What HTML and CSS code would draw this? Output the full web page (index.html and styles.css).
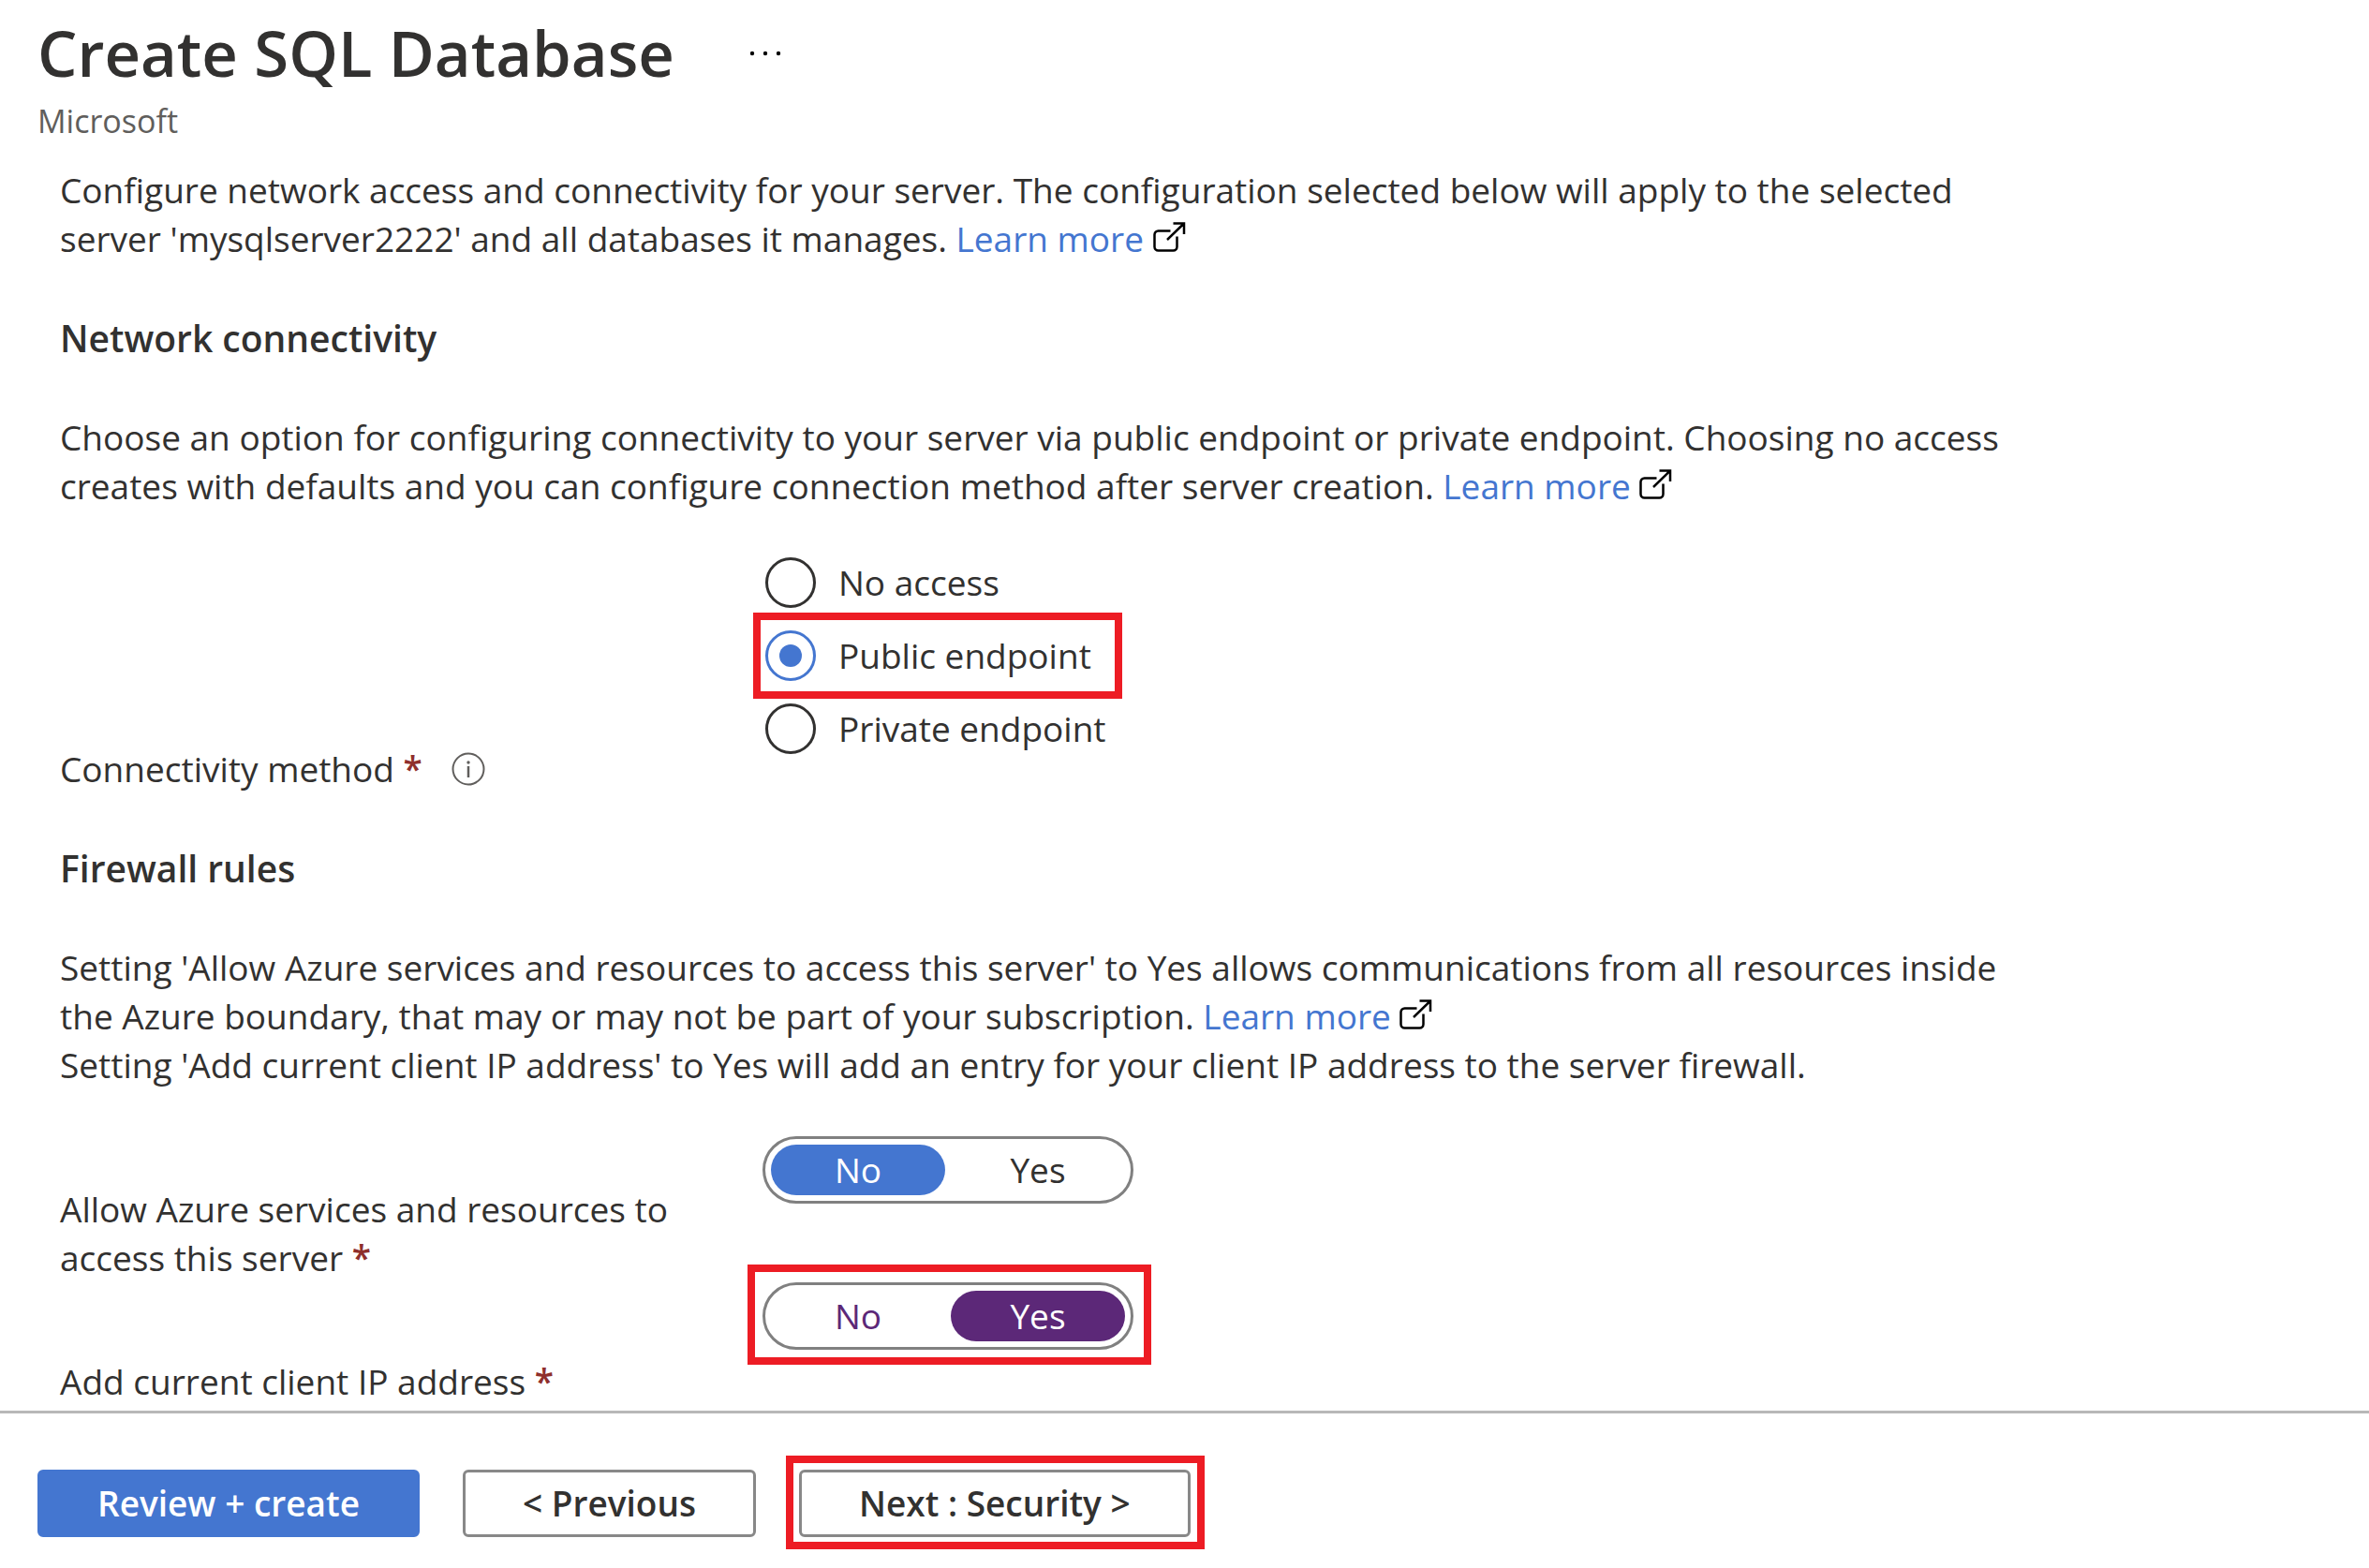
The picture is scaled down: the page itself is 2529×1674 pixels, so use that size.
FILE: index.html
```html
<!DOCTYPE html>
<html lang="en">
<head>
<meta charset="utf-8">
<meta name="viewport" content="width=device-width, initial-scale=1">
<title>Create SQL Database</title>
<link rel="stylesheet" href="styles.css">
</head>
<body>
<svg class="sprite" aria-hidden="true">
  <symbol id="external" viewBox="0 0 36 36">
    <path d="M18.500 9.500H5.500a4 4 0 0 0-4 4v13a4 4 0 0 0 4 4h16a4 4 0 0 0 4-4v-11M15 19 33 1.500M21.500 1.500H33V13" fill="none" stroke="currentColor" stroke-width="2.500"/>
  </symbol>
</svg>
<div class="page">
  <header class="header">
    <div class="title-row">
      <h1 class="title">Create SQL Database</h1>
      <button class="more" type="button" aria-label="More actions">
        <svg class="more-icon" viewBox="0 0 34 6" aria-hidden="true"><circle cx="3" cy="3" r="2.200"/><circle cx="17" cy="3" r="2.200"/><circle cx="31" cy="3" r="2.200"/></svg>
      </button>
    </div>
    <p class="subtitle">Microsoft</p>
  </header>

  <main class="content">
    <p class="text">Configure network access and connectivity for your server. The configuration selected below will apply to the selected server 'mysqlserver2222' and all databases it manages. <a class="link" href="#">Learn more</a> <svg class="external" aria-hidden="true"><use href="#external"/></svg></p>

    <h2 class="heading">Network connectivity</h2>
    <p class="text">Choose an option for configuring connectivity to your server via public endpoint or private endpoint. Choosing no access creates with defaults and you can configure connection method after server creation. <a class="link" href="#">Learn more</a> <svg class="external" aria-hidden="true"><use href="#external"/></svg></p>

    <div class="field field-options">
      <div class="field-label" id="method-label">Connectivity method <span class="required">*</span>
        <svg class="info" viewBox="0 0 36 36" aria-hidden="true"><circle cx="18" cy="18" r="16.500" fill="none" stroke="currentColor" stroke-width="2"/><circle cx="18" cy="11" r="1.700" fill="currentColor"/><path d="M18 15v12" stroke="currentColor" stroke-width="2.500"/></svg>
      </div>
      <div class="options" role="radiogroup" aria-labelledby="method-label">
        <label class="option"><input class="radio" type="radio" name="method">No access</label>
        <label class="option option-marked"><input class="radio" type="radio" name="method" checked>Public endpoint</label>
        <label class="option"><input class="radio" type="radio" name="method">Private endpoint</label>
      </div>
    </div>

    <h2 class="heading">Firewall rules</h2>
    <p class="text">Setting 'Allow Azure services and resources to access this server' to Yes allows communications from all resources inside the Azure boundary, that may or may not be part of your subscription. <a class="link" href="#">Learn more</a> <svg class="external" aria-hidden="true"><use href="#external"/></svg><br>Setting 'Add current client IP address' to Yes will add an entry for your client IP address to the server firewall.</p>

    <div class="field field-azure">
      <div class="field-label" id="azure-label">Allow Azure services and resources to access this server <span class="required">*</span></div>
      <div class="toggle" role="radiogroup" aria-labelledby="azure-label">
        <label class="segment"><input class="segment-input" type="radio" name="azure" checked>No</label>
        <label class="segment"><input class="segment-input" type="radio" name="azure">Yes</label>
      </div>
    </div>
    <div class="field field-client">
      <div class="field-label" id="client-label">Add current client IP address <span class="required">*</span></div>
      <div class="toggle toggle-changed" role="radiogroup" aria-labelledby="client-label">
        <label class="segment"><input class="segment-input" type="radio" name="client">No</label>
        <label class="segment"><input class="segment-input" type="radio" name="client" checked>Yes</label>
      </div>
    </div>
  </main>

  <footer class="footer">
    <button class="button button-primary" type="button">Review + create</button>
    <button class="button" type="button">&lt; Previous</button>
    <button class="button button-marked" type="button">Next : Security &gt;</button>
  </footer>
</div>
</body>
</html>
```

FILE: styles.css
```css
* {
  box-sizing: border-box;
}

body {
  margin: 0;
  background: #fff;
  color: #323130;
  font-family: "Open Sans", "Noto Sans", sans-serif;
  font-size: 37px;
  line-height: 52px;
}

h1, h2, p {
  margin: 0;
}

.sprite {
  display: none;
}

.page {
  display: flex;
  flex-direction: column;
  min-height: 100vh;
}

.header {
  padding: 10px 40px 0;
}

.title-row {
  display: flex;
  align-items: center;
  gap: 80px;
}

.title {
  font-size: 67px;
  font-weight: 600;
  line-height: 93px;
}

.more {
  display: flex;
  padding: 0;
  border: 0;
  background: none;
}

.more-icon {
  width: 34px;
  height: 6px;
}

.subtitle {
  color: #605e5c;
  font-size: 34px;
}

.content {
  flex: 1;
  padding: 22px 64px 0;
}

.text {
  max-width: 2100px;
}

.link {
  color: #4476d0;
  text-decoration: none;
}

.external {
  width: 36px;
  height: 36px;
  color: #000;
  vertical-align: -4px;
}

.heading {
  margin: 54px 0;
  font-size: 39px;
  font-weight: 600;
}

.field {
  display: grid;
  grid-template-columns: 670px 1fr;
  column-gap: 80px;
  align-items: start;
}

.field-options {
  align-items: end;
  margin-top: 50px;
}

.field-azure {
  margin-top: 50px;
}

.field-azure .field-label {
  padding-top: 52px;
}

.field-client .field-label {
  padding-top: 80px;
}

.required {
  color: #8f2f2c;
  font-weight: 600;
}

.info {
  width: 36px;
  height: 36px;
  margin-left: 22px;
  color: #605e5c;
  vertical-align: -4px;
}

.options {
  display: flex;
  flex-direction: column;
  align-items: flex-start;
  gap: 24px;
  padding: 0 0 42px 3px;
}

.option {
  position: relative;
  display: flex;
  align-items: center;
  gap: 24px;
  height: 54px;
}

.option-marked::after {
  content: "";
  position: absolute;
  inset: -19px -33px -19px -13px;
  border: 8px solid #ed1c24;
}

.radio {
  display: grid;
  place-items: center;
  appearance: none;
  width: 54px;
  height: 54px;
  margin: 0;
  border: 3px solid #323130;
  border-radius: 50%;
}

.radio:checked {
  border-color: #4476d0;
}

.radio:checked::before {
  content: "";
  width: 24px;
  height: 24px;
  border-radius: 50%;
  background: #4476d0;
}

.toggle {
  position: relative;
  display: flex;
  gap: 6px;
  width: 396px;
  height: 72px;
  padding: 6px;
  border: 3px solid #808080;
  border-radius: 36px;
}

.toggle-changed::after {
  content: "";
  position: absolute;
  inset: -22px -22px -19px -19px;
  border: 8px solid #ed1c24;
}

.segment {
  flex: 1;
  border-radius: 27px;
  line-height: 54px;
  text-align: center;
}

.segment:has(:checked) {
  background: #4476d0;
  color: #fff;
}

.toggle-changed .segment {
  color: #5c2878;
}

.toggle-changed .segment:has(:checked) {
  background: #5c2878;
  color: #fff;
}

.segment-input {
  position: absolute;
  appearance: none;
  margin: 0;
}

.footer {
  display: flex;
  gap: 46px;
  padding: 60px 40px 33px;
  border-top: 3px solid #b8b8b8;
}

.button {
  position: relative;
  height: 72px;
  padding: 0 61px;
  border: 3px solid #888;
  border-radius: 6px;
  background: #fff;
  color: #323130;
  font: inherit;
  font-weight: 600;
}

.button-primary {
  border-color: #4476d0;
  background: #4476d0;
  color: #fff;
}

.button-marked::after {
  content: "";
  position: absolute;
  inset: -18px -18px -16px -17px;
  border: 8px solid #ed1c24;
}
```
